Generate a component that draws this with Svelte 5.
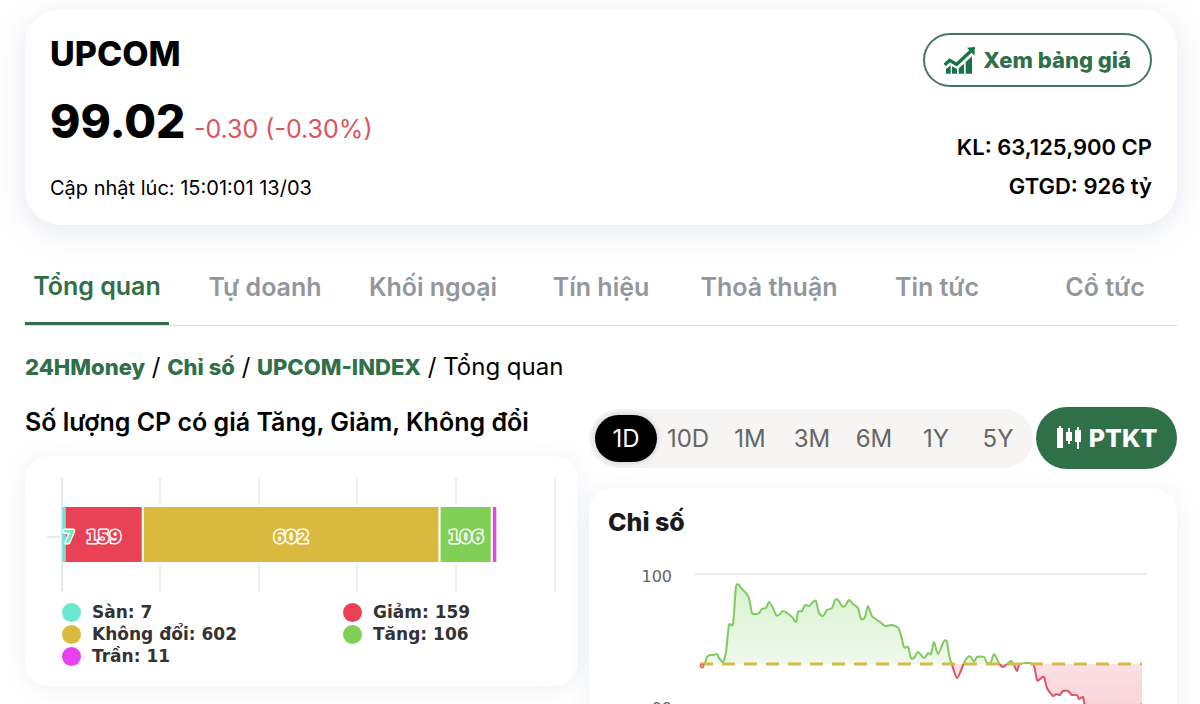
<script>
  const tabs = ["Tổng quan", "Tự doanh", "Khối ngoại", "Tín hiệu", "Thoả thuận", "Tin tức", "Cổ tức"];
  const ranges = ["1D", "10D", "1M", "3M", "6M", "1Y", "5Y"];

  let activeTab = $state("Tổng quan");
  let activeRange = $state("1D");

  const breadth = [
    { name: "Sàn", value: 7, color: "#69e8cf" },
    { name: "Giảm", value: 159, color: "#e94256" },
    { name: "Không đổi", value: 602, color: "#dab93f" },
    { name: "Tăng", value: 106, color: "#80d057" },
    { name: "Trần", value: 11, color: "#e83ff0" },
  ];

  // 1000 stocks span the whole axis
  const axisStart = 36;
  const axisWidth = 493;
  const gridLines = [135, 234, 332, 431, 530];

  const bars = breadth.map((item, i) => {
    const before = breadth.slice(0, i).reduce((sum, b) => sum + b.value, 0);
    const x = axisStart + (before / 1000) * axisWidth;
    const width = (item.value / 1000) * axisWidth;
    // keep narrow labels inside the plot area
    return { ...item, x, width, labelX: Math.max(x + width / 2, axisStart + 8) };
  });

  const points = [
    [113, 120], [116, 117], [118, 111], [121, 109], [125, 109], [128, 108], [130, 112], [134, 116],
    [137, 106], [140, 79], [144, 78], [147, 41], [150, 39], [152, 42], [156, 46], [160, 52],
    [163, 67], [167, 68], [170, 67], [173, 63], [177, 62], [180, 56], [184, 62], [187, 69],
    [190, 69], [194, 65], [198, 67], [203, 71], [207, 76], [209, 66], [213, 65], [216, 59],
    [220, 60], [224, 56], [227, 55], [230, 67], [234, 70], [238, 64], [243, 62], [246, 54],
    [249, 54], [253, 60], [256, 60], [260, 54], [264, 58], [269, 62], [272, 73], [276, 71],
    [279, 60], [283, 70], [291, 76], [296, 80], [303, 79], [310, 83], [315, 101], [319, 101],
    [322, 112], [325, 112], [329, 106], [335, 112], [339, 107], [342, 108], [345, 96], [349, 108],
    [355, 95], [358, 96], [360, 109], [363, 119], [368, 132], [373, 122], [375, 117], [379, 111],
    [382, 111], [385, 116], [388, 111], [395, 111], [398, 117], [402, 116], [405, 108], [410, 117],
    [414, 121], [418, 118], [422, 115], [425, 119], [428, 125], [431, 118], [444, 118], [448, 134],
    [451, 133], [455, 131], [458, 142], [464, 150], [467, 148], [471, 149], [474, 145], [479, 145],
    [483, 149], [488, 149], [490, 153], [494, 151], [496, 159], [505, 175], [520, 185], [540, 170],
    [553, 158],
  ];
  const refY = 118;

  function smooth(pts) {
    let d = `M${pts[0][0]} ${pts[0][1]}`;
    for (let i = 0; i < pts.length - 1; i++) {
      const p0 = pts[i - 1] ?? pts[i];
      const p1 = pts[i];
      const p2 = pts[i + 1];
      const p3 = pts[i + 2] ?? p2;
      const c1 = [p1[0] + (p2[0] - p0[0]) / 8, p1[1] + (p2[1] - p0[1]) / 8];
      const c2 = [p2[0] - (p3[0] - p1[0]) / 8, p2[1] - (p3[1] - p1[1]) / 8];
      d += `C${c1[0]} ${c1[1]} ${c2[0]} ${c2[1]} ${p2[0]} ${p2[1]}`;
    }
    return d;
  }

  const linePath = smooth(points);
  const areaPath = `${linePath}L553 ${refY}L113 ${refY}Z`;
</script>

<main>
  <header class="card summary">
    <div class="quote">
      <h1>UPCOM</h1>
      <p class="price">
        <strong>99.02</strong>
        <span class="change">-0.30 (-0.30%)</span>
      </p>
      <p class="updated">Cập nhật lúc: 15:01:01 13/03</p>
    </div>
    <div class="side">
      <a class="board" href="#bang-gia">
        <svg width="31" height="27" viewBox="0 0 93 81" aria-hidden="true">
          <path d="M2 54 17 40 38 52 80 13" fill="none" stroke="#167448" stroke-width="10" />
          <path d="M69 2 93 0 91 26Z" fill="#167448" />
          <path
            d="M6 66 20 55V80H6ZM24 58 39 66V80H24ZM44 64 60 50V80H44ZM65 45 84 28V80H65Z"
            fill="#167448"
          />
        </svg>
        Xem bảng giá
      </a>
      <dl>
        <div><dt>KL:</dt> <dd>63,125,900 CP</dd></div>
        <div><dt>GTGD:</dt> <dd>926 tỷ</dd></div>
      </dl>
    </div>
  </header>

  <nav class="tabs">
    {#each tabs as tab}
      <button class:active={tab === activeTab} onclick={() => (activeTab = tab)}>{tab}</button>
    {/each}
  </nav>

  <nav class="crumbs">
    <a href="#home">24HMoney</a> / <a href="#chi-so">Chỉ số</a> /
    <a href="#upcom">UPCOM-INDEX</a> / <span>Tổng quan</span>
  </nav>

  <div class="columns">
    <section class="breadth">
      <h2>Số lượng CP có giá Tăng, Giảm, Không đổi</h2>
      <div class="card breadth-card">
        <svg class="plot" viewBox="0 0 553 136" role="img" aria-label="Số lượng CP">
          {#each gridLines as x}
            <path d="M{x} 22V135" stroke="#dcdcde" />
          {/each}
          <rect x="37" y="49" width="436" height="59" fill="#fff" />
          <path d="M22 81H37" stroke="#d5d9e0" />
          {#each bars as bar}
            <rect
              x={bar.x}
              y="50"
              width={bar.width}
              height="57"
              fill={bar.color}
              stroke="#fff"
              stroke-width="2"
            />
          {/each}
          <path d="M37 22V135" stroke="#c6d2e6" />
          <path d="M39 51V106" stroke={breadth[0].color} stroke-width="2" />
          {#each bars.slice(0, 4) as bar}
            <text class="bar-label" x={bar.labelX} y="87" fill={bar.color}>{bar.value}</text>
          {/each}
        </svg>
        <ul class="legend">
          {#each breadth as item}
            <li><i style="background: {item.color}"></i>{item.name}: {item.value}</li>
          {/each}
        </ul>
      </div>
    </section>

    <section class="index">
      <div class="toolbar">
        <div class="ranges">
          {#each ranges as range}
            <button class:active={range === activeRange} onclick={() => (activeRange = range)}>{range}</button>
          {/each}
        </div>
        <button class="ptkt">
          <svg width="27" height="24" viewBox="0 0 27 24" fill="#fff" aria-hidden="true">
            <path d="M1 2H3V0H5V2H7V22H1ZM10 6H12V2H14V6H16V15H14V18H12V15H10ZM19 4H21V1H23V4H25V16H23V23H21V16H19Z" />
          </svg>
          PTKT
        </button>
      </div>
      <div class="card index-card">
        <h3>Chỉ số</h3>
        <svg class="plot" viewBox="0 0 588 220" role="img" aria-label="Chỉ số">
          <defs>
            <linearGradient id="up" gradientUnits="userSpaceOnUse" x1="0" y1="39" x2="0" y2="118">
              <stop offset="0" stop-color="#d9f2d0" />
              <stop offset="1" stop-color="#eff9ec" />
            </linearGradient>
            <linearGradient id="down" gradientUnits="userSpaceOnUse" x1="0" y1="118" x2="0" y2="190">
              <stop offset="0" stop-color="#fbe0e4" />
              <stop offset="1" stop-color="#f7ccd3" />
            </linearGradient>
            <clipPath id="above"><rect width="588" height={refY} /></clipPath>
            <clipPath id="below"><rect y={refY} width="588" height="102" /></clipPath>
          </defs>
          <path d="M106 28H558M106 160H558" stroke="#dadada" />
          <text class="axis" x="83" y="36">100</text>
          <text class="axis" x="83" y="168">99</text>
          <g clip-path="url(#above)">
            <path d={areaPath} fill="url(#up)" />
            <path d={linePath} fill="none" stroke="#7fcb60" stroke-width="2" />
          </g>
          <g clip-path="url(#below)">
            <path d={areaPath} fill="url(#down)" />
            <path d={linePath} fill="none" stroke="#dc5368" stroke-width="2" />
          </g>
          <path
            d="M111 {refY}H553"
            stroke="#d8ba47"
            stroke-width="3"
            stroke-dasharray="13 9"
          />
          <circle cx="113" cy="120" r="2" fill="#f0a060" stroke="#dc5350" />
        </svg>
      </div>
    </section>
  </div>
</main>

<style>
  :global(body) {
    margin: 0;
    background: #fff;
  }

  main {
    box-sizing: border-box;
    height: 100vh;
    overflow: hidden;
    padding: 9px 23px 0 25px;
    font-family: Inter, "Liberation Sans", sans-serif;
    color: #000;
  }

  h1,
  h2,
  h3,
  p,
  dl,
  dd,
  ul {
    margin: 0;
    padding: 0;
  }

  button {
    margin: 0;
    padding: 0;
    border: 0;
    background: none;
    font-family: inherit;
    cursor: pointer;
  }

  .card {
    background: #fff;
    border-radius: 24px;
    box-shadow: 0 2px 20px rgba(110, 140, 180, 0.14);
  }

  .summary {
    display: flex;
    justify-content: space-between;
    padding: 24px 25px 19px;
    border-radius: 36px;
    box-shadow: 0 6px 30px rgba(110, 130, 170, 0.18);
  }

  h1 {
    font-size: 34px;
    line-height: 42px;
    font-weight: 800;
  }

  .price {
    margin-top: 16px;
    line-height: 60px;
    white-space: nowrap;
  }

  .price strong {
    font-size: 46px;
    font-weight: 800;
  }

  .change {
    margin-left: 4px;
    font-size: 25px;
    color: #e05260;
  }

  .updated {
    margin-top: 12px;
    font-size: 20px;
    line-height: 28px;
  }

  .side {
    display: flex;
    flex-direction: column;
    align-items: flex-end;
  }

  .board {
    display: flex;
    align-items: center;
    gap: 8px;
    padding: 0 19px;
    border: 2px solid #43795a;
    border-radius: 27px;
    font-size: 22px;
    line-height: 50px;
    font-weight: 800;
    color: #2f7048;
    text-decoration: none;
  }

  dl {
    margin-top: 41px;
    font-size: 22px;
    line-height: 39px;
    font-weight: 600;
    text-align: right;
  }

  dt,
  dd {
    display: inline;
  }

  .tabs {
    display: grid;
    grid-template-columns: repeat(7, 1fr);
    gap: 24px;
    margin-top: 24px;
    border-bottom: 1px solid #dedede;
  }

  .tabs button {
    height: 76px;
    font-size: 25px;
    font-weight: 600;
    color: #92979d;
    white-space: nowrap;
  }

  .tabs .active {
    box-sizing: border-box;
    border-bottom: 3px solid #2f7048;
    color: #2f7048;
  }

  .crumbs {
    margin-top: 23px;
    font-size: 24px;
    line-height: 36px;
  }

  .crumbs a {
    font-size: 22px;
    font-weight: 800;
    color: #2f7048;
    text-decoration: none;
  }

  .columns {
    display: grid;
    grid-template-columns: 553fr 588fr;
    gap: 11px;
    margin-top: 22px;
  }

  h2 {
    font-size: 25px;
    line-height: 30px;
    font-weight: 600;
    white-space: nowrap;
  }

  .breadth-card {
    margin-top: 19px;
    padding-bottom: 19px;
  }

  .plot {
    display: block;
    width: 100%;
  }

  .bar-label {
    font: bold 17px "DejaVu Sans", sans-serif;
    text-anchor: middle;
    stroke: #fff;
    stroke-width: 3px;
    stroke-linejoin: round;
    paint-order: stroke;
  }

  .legend {
    display: grid;
    grid-template-columns: 281px 1fr;
    margin: 9px 0 0 37px;
    list-style: none;
    font: bold 17px/22px "DejaVu Sans", sans-serif;
    color: #333;
  }

  .legend li {
    display: flex;
    align-items: center;
    gap: 11px;
  }

  .legend i {
    width: 19px;
    height: 19px;
    border-radius: 50%;
  }

  .toolbar {
    display: flex;
    align-items: center;
    gap: 3px;
  }

  .ranges {
    display: flex;
    flex: 1;
    padding: 6px 4px 6px 6px;
    border-radius: 30px;
    background: #f7f5f4;
  }

  .ranges button {
    flex: 1;
    height: 47px;
    border-radius: 24px;
    font-size: 24px;
    color: #666;
  }

  .ranges .active {
    background: #000;
    color: #fff;
    box-shadow: 0 0 6px rgba(0, 0, 0, 0.2);
  }

  .ptkt {
    display: flex;
    align-items: center;
    justify-content: center;
    gap: 6px;
    width: 141px;
    height: 62px;
    border-radius: 31px;
    background: #2f7048;
    font-size: 25px;
    font-weight: 800;
    color: #fff;
  }

  .index-card {
    margin-top: 19px;
    padding-top: 18px;
  }

  h3 {
    padding-left: 19px;
    font-size: 25px;
    line-height: 32px;
    font-weight: 800;
    color: #1a1a1a;
  }

  .index-card .plot {
    margin-top: 8px;
  }

  .axis {
    font: 16px "DejaVu Sans", sans-serif;
    text-anchor: end;
    fill: #666;
  }
</style>
